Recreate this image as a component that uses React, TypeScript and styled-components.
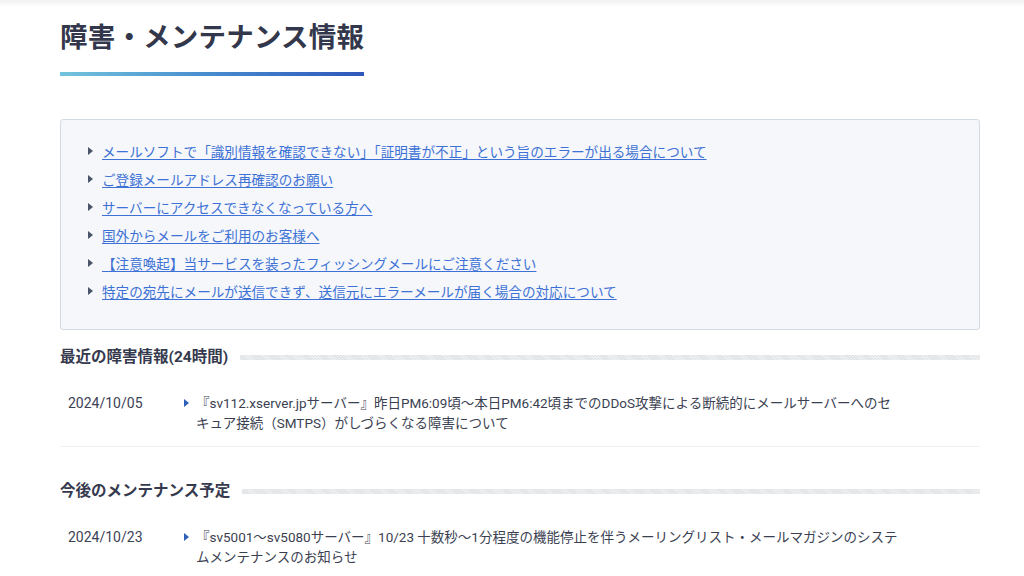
import React from "react";
import styled, { createGlobalStyle } from "styled-components";

interface Notice {
  date: string;
  text: string;
}

const GlobalStyle = createGlobalStyle`
  html, body {
    margin: 0;
    padding: 0;
    background: #fff;
  }
  body {
    font-family: Roboto, "Noto Sans CJK JP", "Noto Sans", sans-serif;
    color: #3b3f52;
    -webkit-font-smoothing: antialiased;
  }
`;

const TopShade = styled.div`
  height: 7px;
  background: linear-gradient(#f0f0f0, #fff);
`;

const Page = styled.main`
  padding: 11px 44px 0 60px;
`;

const Title = styled.h1`
  margin: 0;
  font-size: 27.5px;
  line-height: 39px;
  font-weight: 700;
  color: #33374b;
  letter-spacing: 0.2px;
`;

const TitleBar = styled.div`
  width: 304px;
  height: 4px;
  margin-top: 15px;
  background: linear-gradient(90deg, #72c4dc 0%, #4a90d0 45%, #2e56ba 100%);
`;

const NoticeBox = styled.ul`
  list-style: none;
  margin: 43px 0 0;
  padding: 17px 0 24px 27px;
  background: #f5f7fa;
  border: 1px solid #d3dbe4;
  border-radius: 3px;
`;

const NoticeItem = styled.li`
  display: flex;
  align-items: center;
  gap: 9px;
  height: 28px;
  font-size: 13.6px;
`;

const Arrow = styled.span<{ $color: string }>`
  width: 0;
  height: 0;
  flex: none;
  border-top: 4px solid transparent;
  border-bottom: 4px solid transparent;
  border-left: 5px solid ${(p) => p.$color};
`;

const NoticeLink = styled.a`
  color: #3d71d6;
  text-decoration: underline;
  text-underline-offset: 2px;
  cursor: pointer;
`;

const Section = styled.section<{ $first?: boolean }>`
  margin-top: ${(p) => (p.$first ? "17px" : "34px")};
`;

const SectionHead = styled.div`
  display: flex;
  align-items: center;
  gap: 12px;
`;

const SectionTitle = styled.h2`
  margin: 0;
  font-size: 15.5px;
  line-height: 20px;
  font-weight: 700;
  color: #363a4e;
  white-space: nowrap;
`;

const Hatch = styled.div`
  flex: 1;
  height: 5px;
  background: repeating-linear-gradient(
    45deg,
    #dfe3e6 0,
    #dfe3e6 1px,
    #eef0f2 1px,
    #eef0f2 2px
  );
`;

const Row = styled.div`
  display: flex;
  align-items: flex-start;
  padding: 26px 0 13px 8px;
  border-bottom: 1px solid #eef0f2;
  font-size: 13.5px;
  line-height: 20px;
  color: #3b3f52;
`;

const DateCol = styled.div`
  width: 116px;
  flex: none;
  font-size: 14px;
  color: #3c4256;
`;

const ArrowCol = styled.div`
  flex: none;
  width: 12px;
  height: 20px;
  display: flex;
  align-items: center;
`;

const RowText = styled.div`
  max-width: 703px;
`;

const notices = [
  "メールソフトで「識別情報を確認できない」「証明書が不正」という旨のエラーが出る場合について",
  "ご登録メールアドレス再確認のお願い",
  "サーバーにアクセスできなくなっている方へ",
  "国外からメールをご利用のお客様へ",
  "【注意喚起】当サービスを装ったフィッシングメールにご注意ください",
  "特定の宛先にメールが送信できず、送信元にエラーメールが届く場合の対応について",
];

const incidents: Notice[] = [
  {
    date: "2024/10/05",
    text: "『sv112.xserver.jpサーバー』昨日PM6:09頃〜本日PM6:42頃までのDDoS攻撃による断続的にメールサーバーへのセキュア接続（SMTPS）がしづらくなる障害について",
  },
];

const maintenance: Notice[] = [
  {
    date: "2024/10/23",
    text: "『sv5001〜sv5080サーバー』10/23 十数秒〜1分程度の機能停止を伴うメーリングリスト・メールマガジンのシステムメンテナンスのお知らせ",
  },
];

const NoticeRow: React.FC<{ item: Notice }> = ({ item }) => (
  <Row>
    <DateCol>{item.date}</DateCol>
    <ArrowCol>
      <Arrow $color="#2f60b8" />
    </ArrowCol>
    <RowText>{item.text}</RowText>
  </Row>
);

export default function App() {
  return (
    <>
      <GlobalStyle />
      <TopShade />
      <Page>
        <Title>障害・メンテナンス情報</Title>
        <TitleBar />
        <NoticeBox>
          {notices.map((n) => (
            <NoticeItem key={n}>
              <Arrow $color="#4a5368" />
              <NoticeLink>{n}</NoticeLink>
            </NoticeItem>
          ))}
        </NoticeBox>
        <Section $first>
          <SectionHead>
            <SectionTitle>最近の障害情報(24時間)</SectionTitle>
            <Hatch />
          </SectionHead>
          {incidents.map((i) => (
            <NoticeRow key={i.date} item={i} />
          ))}
        </Section>
        <Section>
          <SectionHead>
            <SectionTitle>今後のメンテナンス予定</SectionTitle>
            <Hatch />
          </SectionHead>
          {maintenance.map((i) => (
            <NoticeRow key={i.date} item={i} />
          ))}
        </Section>
      </Page>
    </>
  );
}
